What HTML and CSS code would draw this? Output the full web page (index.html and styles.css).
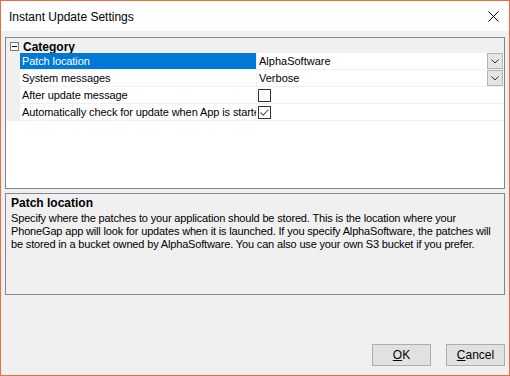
FILE: index.html
```html
<!DOCTYPE html>
<html lang="en">

<head>
    <meta charset="UTF-8">
    <title>Instant Update Settings</title>
    <link rel="stylesheet" href="styles.css">
</head>

<body>
    <div class="window">
        <div class="titlebar">
            <span class="title">Instant Update Settings</span>
            <svg class="close" width="11" height="11" viewBox="0 0 11 11">
                <path d="M0.5 0.5 L10.5 10.5 M10.5 0.5 L0.5 10.5" stroke="#000" stroke-width="1" fill="none"/>
            </svg>
        </div>

        <div class="content">
            <div class="grid">
                <div class="category">
                    <span class="toggle">
                        <svg width="9" height="9" viewBox="0 0 9 9">
                            <rect x="0.5" y="0.5" width="8" height="8" fill="#fff" stroke="#7a7a7a"/>
                            <path d="M2 4.5 H7" stroke="#000" stroke-width="1"/>
                        </svg>
                    </span>
                    <span class="category-name">Category</span>
                </div>

                <div class="row">
                    <div class="margin"></div>
                    <div class="name selected">Patch location</div>
                    <div class="value">
                        <span>AlphaSoftware</span>
                        <span class="drop">
                            <svg width="8" height="5" viewBox="0 0 8 5">
                                <path d="M0.5 0.5 L4 4 L7.5 0.5" stroke="#333" fill="none"/>
                            </svg>
                        </span>
                    </div>
                </div>
                <div class="row">
                    <div class="margin"></div>
                    <div class="name">System messages</div>
                    <div class="value">
                        <span>Verbose</span>
                        <span class="drop">
                            <svg width="8" height="5" viewBox="0 0 8 5">
                                <path d="M0.5 0.5 L4 4 L7.5 0.5" stroke="#333" fill="none"/>
                            </svg>
                        </span>
                    </div>
                </div>
                <div class="row">
                    <div class="margin"></div>
                    <div class="name">After update message</div>
                    <div class="value">
                        <span class="check"></span>
                    </div>
                </div>
                <div class="row">
                    <div class="margin"></div>
                    <div class="name">Automatically check for update when App is started</div>
                    <div class="value">
                        <span class="check">
                            <svg width="11" height="11" viewBox="0 0 11 11">
                                <path d="M1.5 5.5 L4.2 8.2 L9.5 2.5" stroke="#555" stroke-width="1.1" fill="none"/>
                            </svg>
                        </span>
                    </div>
                </div>
            </div>

            <div class="help">
                <div class="help-title">Patch location</div>
                <div class="help-text">Specify where the patches to your application should be stored. This is the location where your<br>PhoneGap app will look for updates when it is launched. If you specify AlphaSoftware, the patches will<br>be stored in a bucket owned by AlphaSoftware. You can also use your own S3 bucket if you prefer.</div>
            </div>

            <div class="actions">
                <button class="btn"><u>O</u>K</button>
                <button class="btn"><u>C</u>ancel</button>
            </div>
        </div>
    </div>
</body>

</html>
```

FILE: styles.css
```css
/* Page */
body {
    margin: 0;
    padding: 0;
    font-family: 'Liberation Sans', Arial, sans-serif;
    font-size: 11px;
    color: #000;
}

/* Window frame */
.window {
    width: 510px;
    height: 376px;
    box-sizing: border-box;
    border: 1px solid #f26b3d;
    background: #f0f0f0;
    display: flex;
    flex-direction: column;
}

.titlebar {
    height: 30px;
    flex: none;
    background: #fff;
    display: flex;
    align-items: center;
    justify-content: space-between;
    padding: 0 10px 0 8px;
}

.title {
    font-size: 12px;
    padding-top: 1px;
}

.close {
    display: block;
    margin-top: 1px;
}

.content {
    flex: 1;
    display: flex;
    flex-direction: column;
    padding: 6px 4px 9px 4px;
}

/* Property grid */
.grid {
    height: 152px;
    box-sizing: border-box;
    border: 1px solid #828790;
    background: #fff;
}

.category {
    height: 15px;
    background: #f0f0f0;
    display: flex;
    align-items: center;
}

.toggle {
    width: 14px;
    display: flex;
    justify-content: center;
    padding-left: 1px;
    padding-top: 2px;
}

.toggle svg {
    display: block;
}

.category-name {
    font-weight: bold;
    font-size: 12px;
    padding-left: 2px;
    padding-top: 2px;
}

.row {
    display: grid;
    grid-template-columns: 14px 237px 1fr;
    height: 17px;
}

.margin {
    background: #f0f0f0;
}

.name,
.value {
    border-bottom: 1px solid #f0f0f0;
    display: flex;
    align-items: center;
    overflow: hidden;
    white-space: nowrap;
}

.name {
    padding-left: 2px;
    border-right: 1px solid #f0f0f0;
    letter-spacing: -0.1px;
}

.name.selected {
    background: #0078d7;
    color: #fff;
}

.value {
    padding-left: 2px;
    justify-content: space-between;
}

.drop {
    width: 14px;
    height: 14px;
    margin-right: 1px;
    background: #e5e5e5;
    border: 1px solid #b4b4b4;
    display: flex;
    align-items: center;
    justify-content: center;
}

.drop svg {
    display: block;
    margin-top: 1px;
}

.check {
    width: 11px;
    height: 11px;
    border: 1px solid #333;
    background: #fff;
    margin-left: -1px;
    display: flex;
    align-items: center;
    justify-content: center;
}

.check svg {
    display: block;
}

/* Help panel */
.help {
    margin-top: 4px;
    height: 102px;
    box-sizing: border-box;
    border: 1px solid #828790;
    padding: 2px 5px;
}

.help-title {
    font-weight: bold;
    font-size: 12px;
    line-height: 14px;
    margin-bottom: 2px;
}

.help-text {
    line-height: 13px;
    white-space: nowrap;
    letter-spacing: -0.16px;
}

/* Buttons */
.actions {
    margin-top: auto;
    display: flex;
    justify-content: flex-end;
    gap: 15px;
}

.btn {
    width: 59px;
    height: 22px;
    background: #e1e1e1;
    border: 1px solid #adadad;
    font-family: 'Liberation Sans', Arial, sans-serif;
    font-size: 12px;
    padding: 0;
    color: #000;
}
```
